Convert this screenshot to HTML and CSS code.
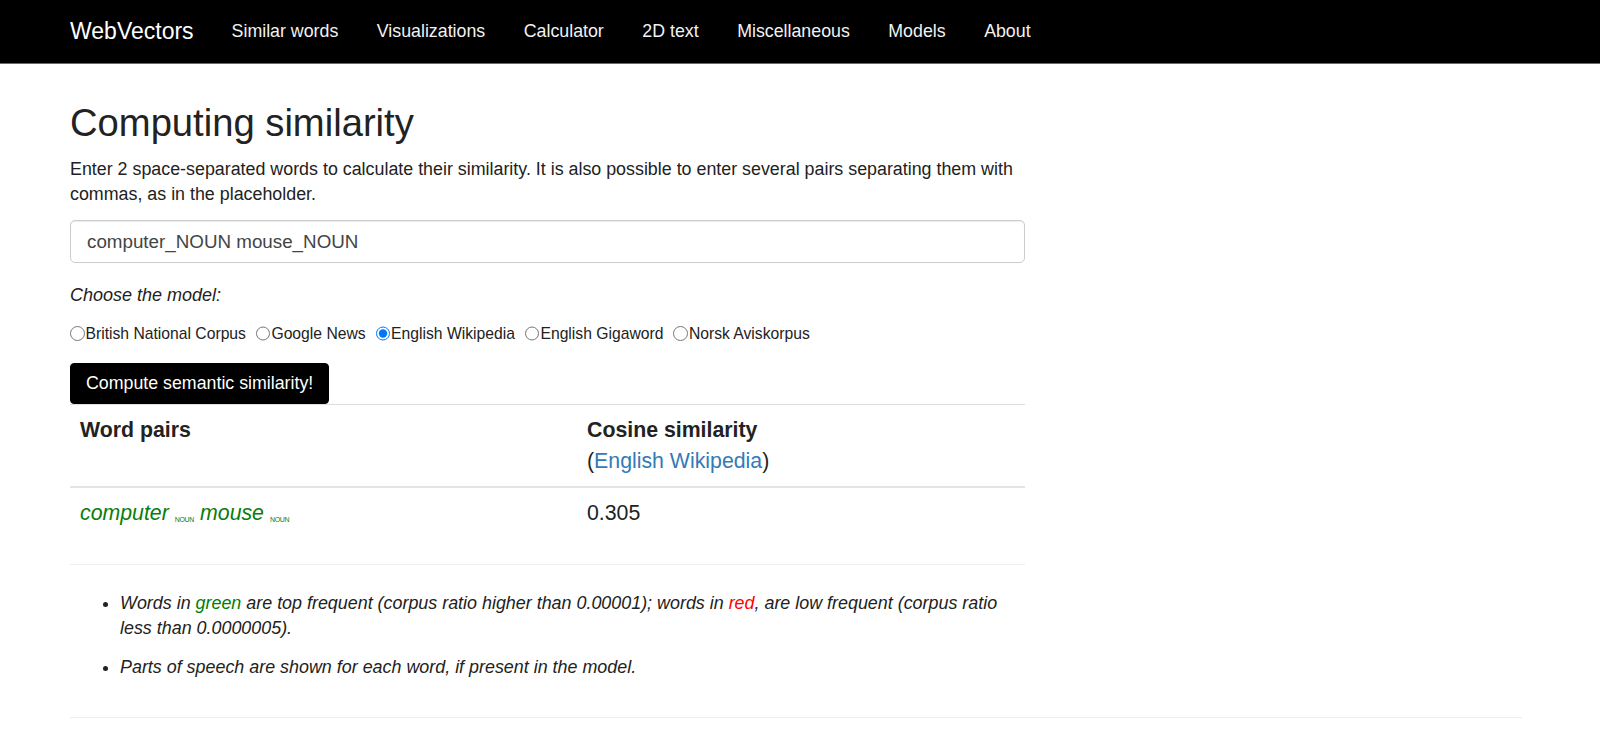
FILE: index.html
```html
<!DOCTYPE html>
<html lang="en">
<head>
<meta charset="utf-8">
<title>WebVectors: Computing similarity</title>
<link rel="stylesheet" href="styles.css">
</head>
<body>
<nav class="navbar">
  <div class="nav-inner">
    <a class="brand" href="#">WebVectors</a>
    <ul class="nav-links">
      <li><a href="#">Similar words</a></li>
      <li><a href="#">Visualizations</a></li>
      <li><a href="#">Calculator</a></li>
      <li><a href="#">2D text</a></li>
      <li><a href="#">Miscellaneous</a></li>
      <li><a href="#">Models</a></li>
      <li><a href="#">About</a></li>
    </ul>
  </div>
</nav>
<main class="container">
  <div class="content">
    <h1 class="title">Computing similarity</h1>
    <p class="intro">Enter 2 space-separated words to calculate their similarity. It is also possible to enter several pairs separating them with commas, as in the placeholder.</p>
    <form class="query-form">
      <input class="query-input" type="text" value="computer_NOUN mouse_NOUN">
      <p class="choose">Choose the model:</p>
      <div class="radio-row">
        <label class="radio"><input type="radio" name="model">British National Corpus</label>
        <label class="radio"><input type="radio" name="model">Google News</label>
        <label class="radio"><input type="radio" name="model" checked>English Wikipedia</label>
        <label class="radio"><input type="radio" name="model">English Gigaword</label>
        <label class="radio"><input type="radio" name="model">Norsk Aviskorpus</label>
      </div>
      <button class="btn" type="button">Compute semantic similarity!</button>
    </form>
    <table class="result-table">
      <thead>
        <tr>
          <th class="col-pairs">Word pairs</th>
          <th>Cosine similarity<br><span class="model-ref">(<a href="#">English Wikipedia</a>)</span></th>
        </tr>
      </thead>
      <tbody>
        <tr>
          <td class="pair"><span class="word">computer</span> <sub class="pos">NOUN</sub> <span class="word">mouse</span> <sub class="pos">NOUN</sub></td>
          <td class="score">0.305</td>
        </tr>
      </tbody>
    </table>
    <ul class="notes">
      <li>Words in <span class="green">green</span> are top frequent (corpus ratio higher than 0.00001); words in <span class="red">red</span>, are low frequent (corpus ratio less than 0.0000005).</li>
      <li>Parts of speech are shown for each word, if present in the model.</li>
    </ul>
  </div>
  <hr class="bottom-rule">
</main>
</body>
</html>
```
FILE: styles.css
```css
* { box-sizing: border-box; }

html, body {
  margin: 0;
  padding: 0;
  background: #fff;
}

body {
  font-family: "Liberation Sans", Arial, Helvetica, sans-serif;
  font-size: 17.8px;
  line-height: 25px;
  color: #333;
}

a { color: #337ab7; text-decoration: none; }

.navbar {
  background: #000;
  height: 64px;
  border-bottom: 1px solid #5d6b7a;
}

.nav-inner {
  display: flex;
  align-items: center;
  height: 63px;
  padding-left: 70px;
}

.brand {
  color: #fff;
  font-size: 23px;
  margin-right: 38px;
}

.nav-links {
  display: flex;
  list-style: none;
  margin: 0;
  padding: 0;
  gap: 38.5px;
}

.nav-links a {
  color: #f2f2f2;
  font-size: 17.8px;
}

.container {
  padding: 0 70px;
  width: 1600px;
}

.content {
  width: 955px;
}

.title {
  font-size: 38.2px;
  font-weight: 400;
  line-height: 42px;
  margin: 38px 0 0;
  color: #222;
}

.intro {
  font-size: 17.85px;
  line-height: 25px;
  margin: 13px 0 0;
  color: #222;
}

.query-form {
  display: flex;
  flex-direction: column;
  align-items: flex-start;
}

.query-input {
  margin-top: 13px;
  width: 955px;
  height: 43px;
  padding: 0 16px;
  border: 1px solid #ccc;
  border-radius: 5px;
  font-family: inherit;
  font-size: 18.8px;
  color: #444;
  box-shadow: inset 0 1px 1px rgba(0,0,0,0.075);
}

.choose {
  margin: 20px 0 0;
  font-style: italic;
  font-size: 18px;
  color: #222;
}

.radio-row {
  display: flex;
  margin-top: 13px;
  gap: 10px;
  font-size: 15.7px;
  line-height: 25px;
  color: #222;
}

.radio {
  display: flex;
  align-items: center;
}

.radio input {
  margin: 0 1px 0 0;
  width: 14.5px;
  height: 14.5px;
}

.btn {
  margin-top: 17px;
  background: #000;
  color: #fff;
  border: 1px solid #000;
  border-radius: 4px;
  height: 41px;
  padding: 0 15px;
  font-family: inherit;
  font-size: 17.8px;
}

.result-table {
  width: 955px;
  border-collapse: collapse;
  font-size: 21.3px;
  line-height: 31px;
  color: #222;
}

.result-table th,
.result-table td {
  text-align: left;
  vertical-align: top;
  padding: 10px;
}

.result-table th {
  padding-bottom: 9px;
  border-top: 1px solid #ddd;
  border-bottom: 2px solid #e4e4e4;
  font-weight: 700;
}

.result-table .model-ref { font-weight: 400; }

.col-pairs { width: 507px; }

.result-table td {
  height: 77px;
  border-bottom: 1px solid #eee;
}

.pair { color: #0a7d0a; }

.word { font-style: italic; }

.pos {
  font-size: 7px;
  vertical-align: -2px;
  line-height: 0;
  letter-spacing: -0.3px;
}

.notes {
  margin: 26px 0 0;
  padding-left: 50px;
  font-style: italic;
  font-size: 17.9px;
  color: #222;
}

.notes li { margin-bottom: 14px; }

.green { color: #008000; }
.red { color: #f00; }

.bottom-rule {
  border: 0;
  border-top: 1px solid #eee;
  margin: 37px 0 0;
  width: 1452px;
}
```
